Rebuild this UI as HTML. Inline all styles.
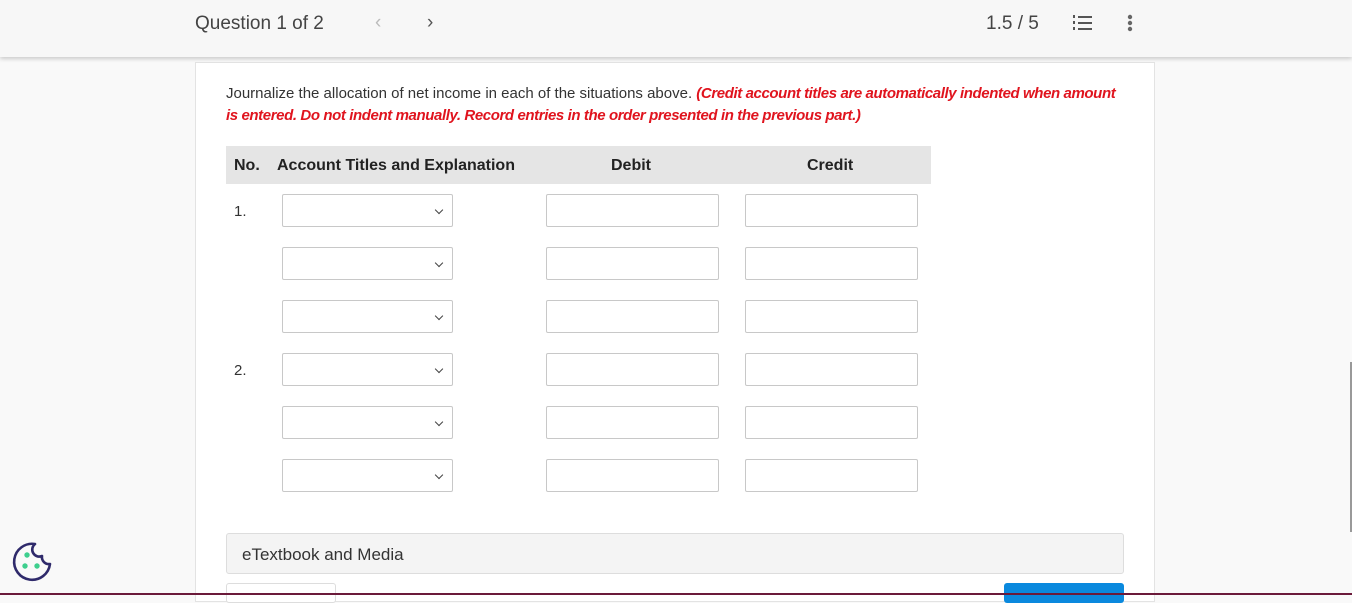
<!DOCTYPE html>
<html><head><style>
*{margin:0;padding:0;box-sizing:border-box}
body{width:1352px;height:595px;overflow:hidden;background:#f9f9f9;font-family:"Liberation Sans",sans-serif;position:relative}
.hdr{position:absolute;left:0;top:0;width:1352px;height:57px;background:#f7f7f7;box-shadow:0 2px 4px rgba(0,0,0,.18);z-index:2}
.panel{position:absolute;left:195px;top:62px;width:960px;height:540px;background:#fff;border:1px solid #e3e3e3}
.t{position:absolute;white-space:nowrap}
.sel,.inp{position:absolute;height:33px;border:1px solid #c8c8c8;border-radius:2px;background:#fff}
.sel{left:282px;width:171px}
.sel:after{content:"";position:absolute;right:10px;top:12px;width:5px;height:5px;border-right:1.5px solid #444;border-bottom:1.5px solid #444;transform:rotate(45deg)}
.d{left:546px;width:173px}.c{left:745px;width:173px}
</style></head><body>
<div class="hdr">
<div class="t" style="left:195px;top:13px;font-size:19px;color:#444">Question 1 of 2</div>
<div class="t" style="left:375px;top:12px;font-size:19px;color:#bbb">&#8249;</div>
<div class="t" style="left:427px;top:12px;font-size:19px;color:#555">&#8250;</div>
<div class="t" style="left:986px;top:13px;font-size:19px;color:#444">1.5 / 5</div>
<svg style="position:absolute;left:1072px;top:14px" width="22" height="18"><g fill="#555"><rect x="6" y="2" width="14" height="2"/><rect x="6" y="8" width="14" height="2"/><rect x="6" y="14" width="14" height="2"/><rect x="1" y="1" width="2" height="3"/><rect x="1" y="7" width="2" height="3"/><rect x="1" y="13" width="2" height="3"/></g></svg>
<svg style="position:absolute;left:1127px;top:14px" width="6" height="18"><g fill="#666"><circle cx="3" cy="3" r="2.2"/><circle cx="3" cy="9" r="2.2"/><circle cx="3" cy="15" r="2.2"/></g></svg>
</div>
<div class="panel"></div>
<div class="t" style="left:226px;top:83px;font-size:15px;line-height:22px;color:#333;white-space:normal;width:900px">Journalize the allocation of net income in each of the situations above. <b style="color:#e0141e;font-style:italic;letter-spacing:-0.4px">(Credit account titles are automatically indented when amount is entered. Do not indent manually. Record entries in the order presented in the previous part.)</b></div>
<div style="position:absolute;left:226px;top:146px;width:705px;height:38px;background:#e5e5e5"></div>
<div class="t" style="left:234px;top:157px;font-size:16px;font-weight:bold;color:#222">No.</div>
<div class="t" style="left:277px;top:157px;font-size:16px;font-weight:bold;color:#222">Account Titles and Explanation</div>
<div class="t" style="left:611px;top:157px;font-size:16px;font-weight:bold;color:#222">Debit</div>
<div class="t" style="left:807px;top:157px;font-size:16px;font-weight:bold;color:#222">Credit</div>
<div class="t" style="left:234px;top:203px;font-size:15px;color:#333">1.</div>
<div class="t" style="left:234px;top:362px;font-size:15px;color:#333">2.</div>
<div class="sel" style="top:194px"></div><div class="inp d" style="top:194px"></div><div class="inp c" style="top:194px"></div>
<div class="sel" style="top:247px"></div><div class="inp d" style="top:247px"></div><div class="inp c" style="top:247px"></div>
<div class="sel" style="top:300px"></div><div class="inp d" style="top:300px"></div><div class="inp c" style="top:300px"></div>
<div class="sel" style="top:353px"></div><div class="inp d" style="top:353px"></div><div class="inp c" style="top:353px"></div>
<div class="sel" style="top:406px"></div><div class="inp d" style="top:406px"></div><div class="inp c" style="top:406px"></div>
<div class="sel" style="top:459px"></div><div class="inp d" style="top:459px"></div><div class="inp c" style="top:459px"></div>
<div style="position:absolute;left:226px;top:533px;width:898px;height:41px;background:#f4f4f4;border:1px solid #ddd;border-radius:3px"></div>
<div class="t" style="left:242px;top:545px;font-size:17px;color:#333">eTextbook and Media</div>
<div style="position:absolute;left:226px;top:583px;width:110px;height:20px;background:#fff;border:1px solid #ddd;border-radius:3px"></div>
<div style="position:absolute;left:1004px;top:583px;width:120px;height:20px;background:#0a89de;border-radius:3px"></div>
<svg style="position:absolute;left:11px;top:541px" width="42" height="42"><path d="M24 3 A18 18 0 1 0 39 23 A7 7 0 0 1 31 15 A7 7 0 0 1 24 3 Z" fill="none" stroke="#2f2a6b" stroke-width="2.6" stroke-linejoin="round"/><g fill="#3ecf8e"><circle cx="16" cy="14" r="2.7"/><circle cx="14" cy="25" r="2.7"/><circle cx="26" cy="25" r="2.7"/></g></svg>
<div style="position:absolute;left:1350px;top:362px;width:2px;height:170px;background:#999"></div>
<div style="position:absolute;left:0;top:593px;width:1352px;height:2px;background:#6b1a3a"></div>
</body></html>
